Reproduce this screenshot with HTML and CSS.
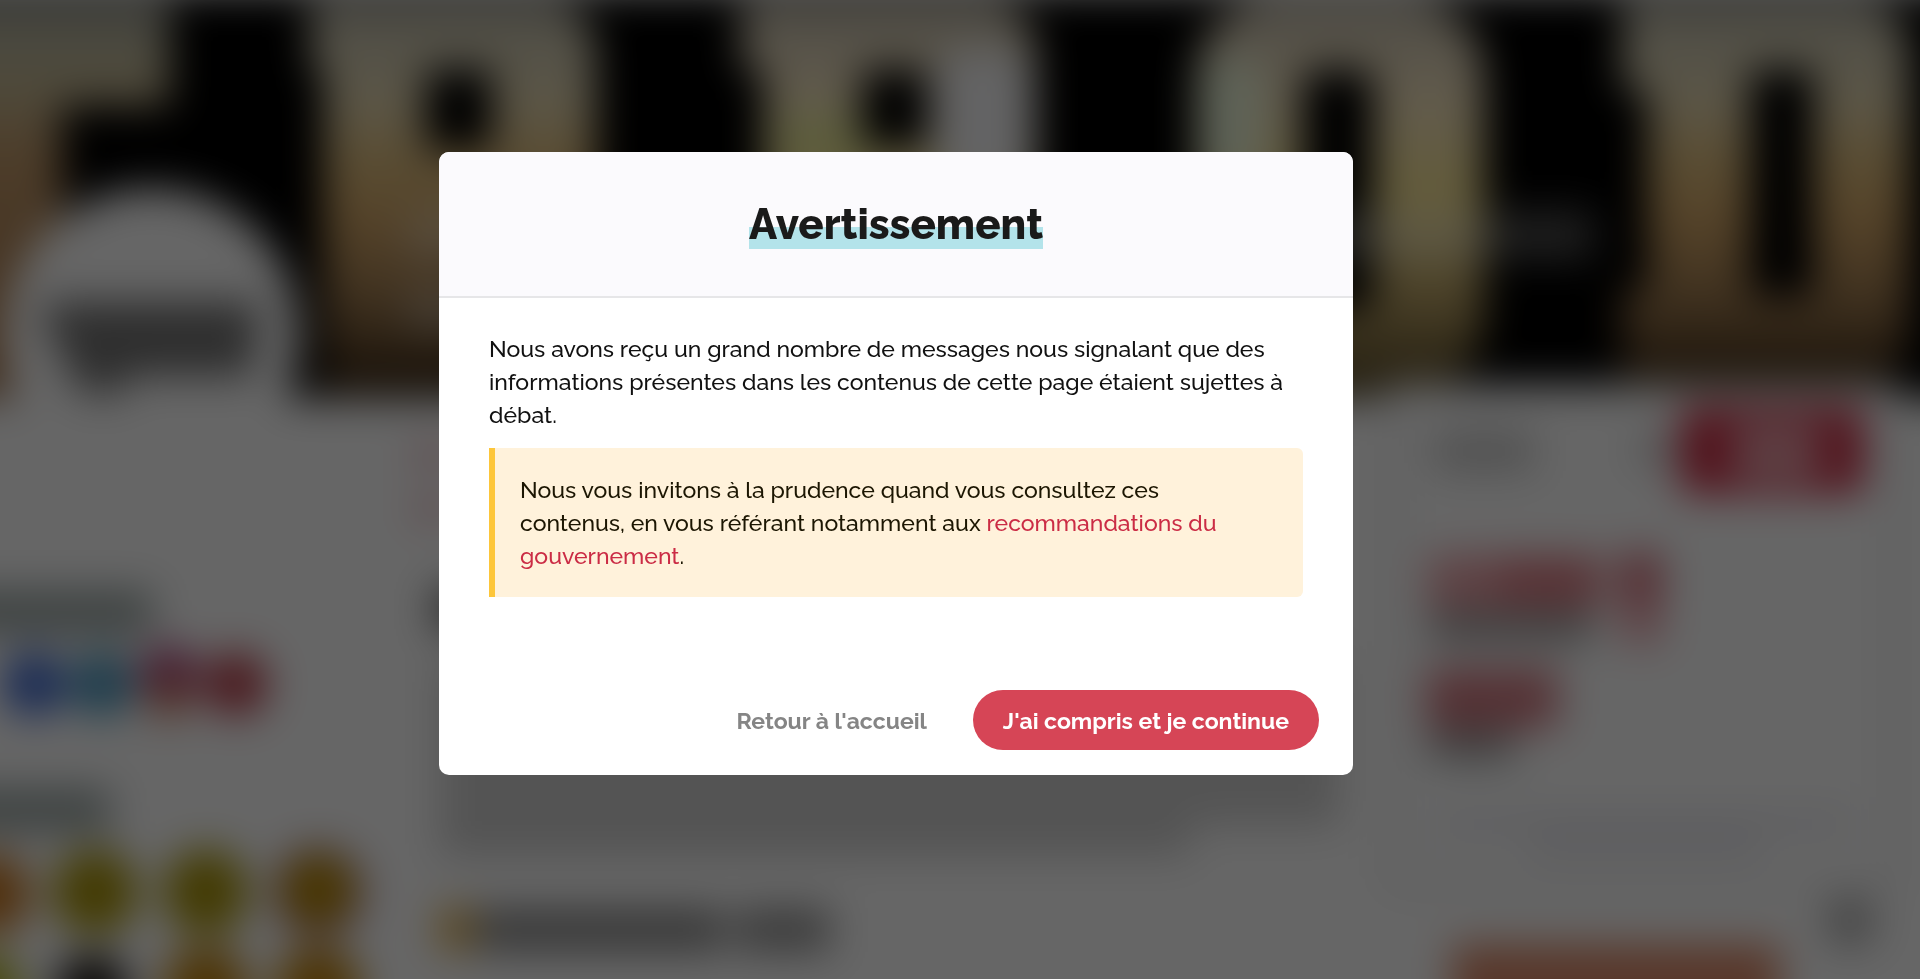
FILE: index.html
```html
<!DOCTYPE html>
<html lang="fr">
<head>
<meta charset="utf-8">
<meta name="viewport" content="width=device-width, initial-scale=1">
<title>Avertissement</title>
<link rel="stylesheet" href="styles.css">
</head>
<body>
<svg class="backdrop" viewBox="0 0 1920 979" preserveAspectRatio="xMidYMin slice" aria-hidden="true">
  <defs>
    <filter id="soft" filterUnits="userSpaceOnUse" x="-80" y="-80" width="2080" height="1140" color-interpolation-filters="sRGB">
      <feGaussianBlur stdDeviation="20"/>
    </filter>
    <linearGradient id="gold" gradientUnits="userSpaceOnUse" x1="0" y1="0" x2="0" y2="395">
      <stop offset="0" stop-color="#bebcae"/>
      <stop offset=".25" stop-color="#e4d8b4"/>
      <stop offset=".4" stop-color="#e0c080"/>
      <stop offset=".55" stop-color="#d4a868"/>
      <stop offset=".75" stop-color="#a07c50"/>
      <stop offset="1" stop-color="#30200f"/>
    </linearGradient>
    <linearGradient id="copper" gradientUnits="userSpaceOnUse" x1="0" y1="0" x2="0" y2="395">
      <stop offset="0" stop-color="#aaaca2"/>
      <stop offset=".2" stop-color="#c6bc98"/>
      <stop offset=".4" stop-color="#c09868"/>
      <stop offset="1" stop-color="#a07048"/>
    </linearGradient>
    <linearGradient id="olive" gradientUnits="userSpaceOnUse" x1="0" y1="0" x2="0" y2="395">
      <stop offset="0" stop-color="#c3bdae"/>
      <stop offset=".25" stop-color="#f4e4c0"/>
      <stop offset=".5" stop-color="#f8e490"/>
      <stop offset=".75" stop-color="#b8a064"/>
      <stop offset="1" stop-color="#504222"/>
    </linearGradient>
  </defs>
  <g filter="url(#soft)">
    <rect x="-80" y="-80" width="2080" height="1140" fill="#fff"/>
    <rect x="-80" y="-8" width="2080" height="406" fill="#000"/>

    <!-- banner artwork -->
    <rect x="-80" y="0" width="250" height="106" fill="url(#copper)"/>
    <rect x="-80" y="0" width="142" height="396" fill="url(#copper)"/>
    <g fill="url(#gold)">
      <rect x="310" y="0" width="150" height="70"/>
      <rect x="324" y="0" width="272" height="240" rx="50"/>
      <rect x="324" y="20" width="150" height="376"/>
      <rect x="1622" y="0" width="170" height="90"/>
      <rect x="1648" y="0" width="260" height="384" rx="50"/>
      <rect x="1648" y="40" width="120" height="320"/>
      <rect x="1622" y="290" width="170" height="95"/>
    </g>
    <g fill="url(#olive)">
      <rect x="741" y="0" width="150" height="70"/>
      <rect x="764" y="0" width="272" height="220" rx="50"/>
      <rect x="764" y="0" width="130" height="220"/>
      <rect x="1196" y="-4" width="288" height="400" rx="80"/>
    </g>
    <rect x="936" y="50" width="96" height="140" rx="30" fill="#f8f8fa"/>
    <rect x="1200" y="60" width="60" height="120" rx="17" fill="#ecf8dc"/>
    <rect x="776" y="110" width="100" height="60" fill="#d8e880" opacity=".45"/>
    <g fill="#000">
      <rect x="426" y="70" width="66" height="80" rx="6"/>
      <rect x="862" y="70" width="66" height="78" rx="6"/>
      <rect x="1302" y="70" width="72" height="240" rx="16"/>
      <rect x="1750" y="70" width="64" height="226" rx="6"/>
    </g>
    <g fill="#fff">
      <rect x="405" y="210" width="1190" height="50" opacity=".3"/>
      <rect x="405" y="290" width="80" height="40" opacity=".3"/>
    </g>

    <!-- avatar -->
    <circle cx="152" cy="336" r="148" fill="#fff"/>
    <g fill="#747474">
      <rect x="46" y="302" width="212" height="38"/>
      <rect x="64" y="340" width="190" height="36"/>
      <rect x="80" y="368" width="44" height="26"/>
    </g>

    <!-- left column -->
    <rect x="-80" y="590" width="232" height="44" fill="#98a4a2"/>
    <circle cx="34" cy="684" r="32" fill="#3c68d0"/>
    <circle cx="102" cy="684" r="32" fill="#4494bc"/>
    <circle cx="169" cy="676" r="30" fill="#a83c78"/>
    <circle cx="169" cy="698" r="20" fill="#cc7050"/>
    <circle cx="236" cy="684" r="32" fill="#b83c48"/>
    <rect x="-80" y="788" width="190" height="44" fill="#98a4a2"/>
    <circle cx="-10" cy="894" r="41" fill="#c87820"/>
    <circle cx="95" cy="892" r="43" fill="#a89408"/>
    <circle cx="206" cy="892" r="43" fill="#a89408"/>
    <circle cx="318" cy="892" r="45" fill="#a86c68"/>
    <circle cx="318" cy="890" r="34" fill="#b88c00"/>
    <circle cx="-16" cy="990" r="38" fill="#b0b420"/>
    <circle cx="92" cy="992" r="38" fill="#201c18"/>
    <circle cx="206" cy="990" r="44" fill="#c08410"/>
    <circle cx="318" cy="990" r="44" fill="#c08410"/>

    <!-- middle column -->
    <rect x="415" y="446" width="34" height="18" fill="#e8a0a8"/>
    <rect x="415" y="500" width="34" height="18" fill="#e8a0a8"/>
    <rect x="434" y="588" width="80" height="42" fill="#666"/>
    <rect x="440" y="660" width="900" height="166" fill="#d2d2d2"/>
    <rect x="440" y="820" width="750" height="36" fill="#d0d0d0"/>
    <rect x="440" y="908" width="32" height="42" fill="#e0a838"/>
    <rect x="476" y="908" width="248" height="44" fill="#8c8c8c"/>
    <rect x="736" y="908" width="94" height="44" fill="#949494"/>

    <!-- right column -->
    <rect x="1382" y="384" width="522" height="510" rx="16" fill="#f2f2f2"/>
    <rect x="1402" y="394" width="482" height="480" rx="12" fill="#fff"/>
    <rect x="1434" y="430" width="100" height="42" fill="#ccc"/>
    <circle cx="1655" cy="450" r="18" fill="#ccc"/>
    <rect x="1680" y="406" width="184" height="88" rx="12" fill="#cc2c44"/>
    <rect x="1732" y="424" width="88" height="56" fill="#f0b8c0" opacity=".85"/>
    <rect x="1428" y="554" width="174" height="58" fill="#eca4aa"/>
    <rect x="1500" y="558" width="100" height="44" fill="#dc7c84"/>
    <rect x="1620" y="552" width="42" height="50" fill="#d46c78"/>
    <rect x="1620" y="602" width="42" height="42" fill="#eca8b0"/>
    <rect x="1430" y="610" width="162" height="32" fill="#a0a0a0"/>
    <rect x="1426" y="668" width="132" height="60" fill="#d47c84"/>
    <rect x="1430" y="728" width="84" height="32" fill="#a0a0a0"/>
    <rect x="1436" y="814" width="414" height="20" fill="#e8e8ee"/>
    <rect x="1530" y="836" width="230" height="20" fill="#e8e8ee"/>
    <circle cx="1850" cy="922" r="26" fill="#b0b0b0"/>
    <rect x="1452" y="944" width="328" height="100" fill="#dc8c6c"/>
  </g>
</svg>

<div class="overlay">
  <section class="modal" role="dialog" aria-modal="true" aria-labelledby="modal-title">
    <header class="modal-header">
      <h1 class="modal-title"><span class="highlight" id="modal-title">Avertissement</span></h1>
    </header>
    <div class="modal-body">
      <p class="text">Nous avons reçu un grand nombre de messages nous signalant que des informations présentes dans les contenus de cette page étaient sujettes à débat.</p>
      <p class="text notice">Nous vous invitons à la prudence quand vous consultez ces contenus, en vous référant notamment aux <a class="link" href="#">recommandations du gouvernement</a>.</p>
    </div>
    <footer class="modal-footer">
      <button class="button button-plain" type="button">Retour à l'accueil</button>
      <button class="button button-primary" type="button">J'ai compris et je continue</button>
    </footer>
  </section>
</div>
</body>
</html>
```
FILE: styles.css
```css
* {
  box-sizing: border-box;
}

body {
  margin: 0;
  overflow: hidden;
  background: #666;
  color: #111;
  font-family: Raleway, Lato, "Open Sans", sans-serif;
}

.backdrop {
  position: fixed;
  inset: 0;
  width: 100%;
  height: 100%;
}

.overlay {
  position: fixed;
  inset: 0;
  display: flex;
  justify-content: center;
  align-items: flex-start;
  padding: 152px 128px 24px 0;
  overflow: auto;
  background: rgba(0, 0, 0, 0.6);
}

.modal {
  width: 100%;
  max-width: 914px;
  overflow: hidden;
  border-radius: 10px;
  background: #fff;
}

.modal-header {
  padding: 43px 24px 41px;
  border-bottom: 2px solid #e6e6e8;
  background: #fbfafd;
  text-align: center;
}

.modal-title {
  margin: 0;
  color: #1a1a1a;
  font-size: 42px;
  font-weight: 800;
  line-height: 60px;
}

.highlight {
  display: inline-block;
  line-height: 48px;
  background: linear-gradient(transparent 54%, #b3e3ea 54%);
}

.modal-body {
  display: grid;
  gap: 17px;
  padding: 34px 50px 68px;
}

.text {
  margin: 0;
  font-size: 23px;
  font-weight: 500;
  line-height: 33px;
}

.notice {
  padding: 25px 48px 25px 25px;
  border-left: 6px solid #fdc63a;
  border-radius: 0 6px 6px 0;
  background: #fff2db;
  color: #1c1602;
}

.link {
  color: #cb2c45;
  text-decoration: none;
}

.modal-footer {
  display: flex;
  justify-content: flex-end;
  gap: 16px;
  padding: 25px 34px;
}

.button {
  height: 60px;
  padding: 0 30px;
  border: 0;
  border-radius: 30px;
  font-family: inherit;
  font-size: 23px;
  font-weight: 700;
  cursor: pointer;
}

.button-plain {
  background: transparent;
  color: #858585;
}

.button-primary {
  background: #d64556;
  color: #fff;
}
```
